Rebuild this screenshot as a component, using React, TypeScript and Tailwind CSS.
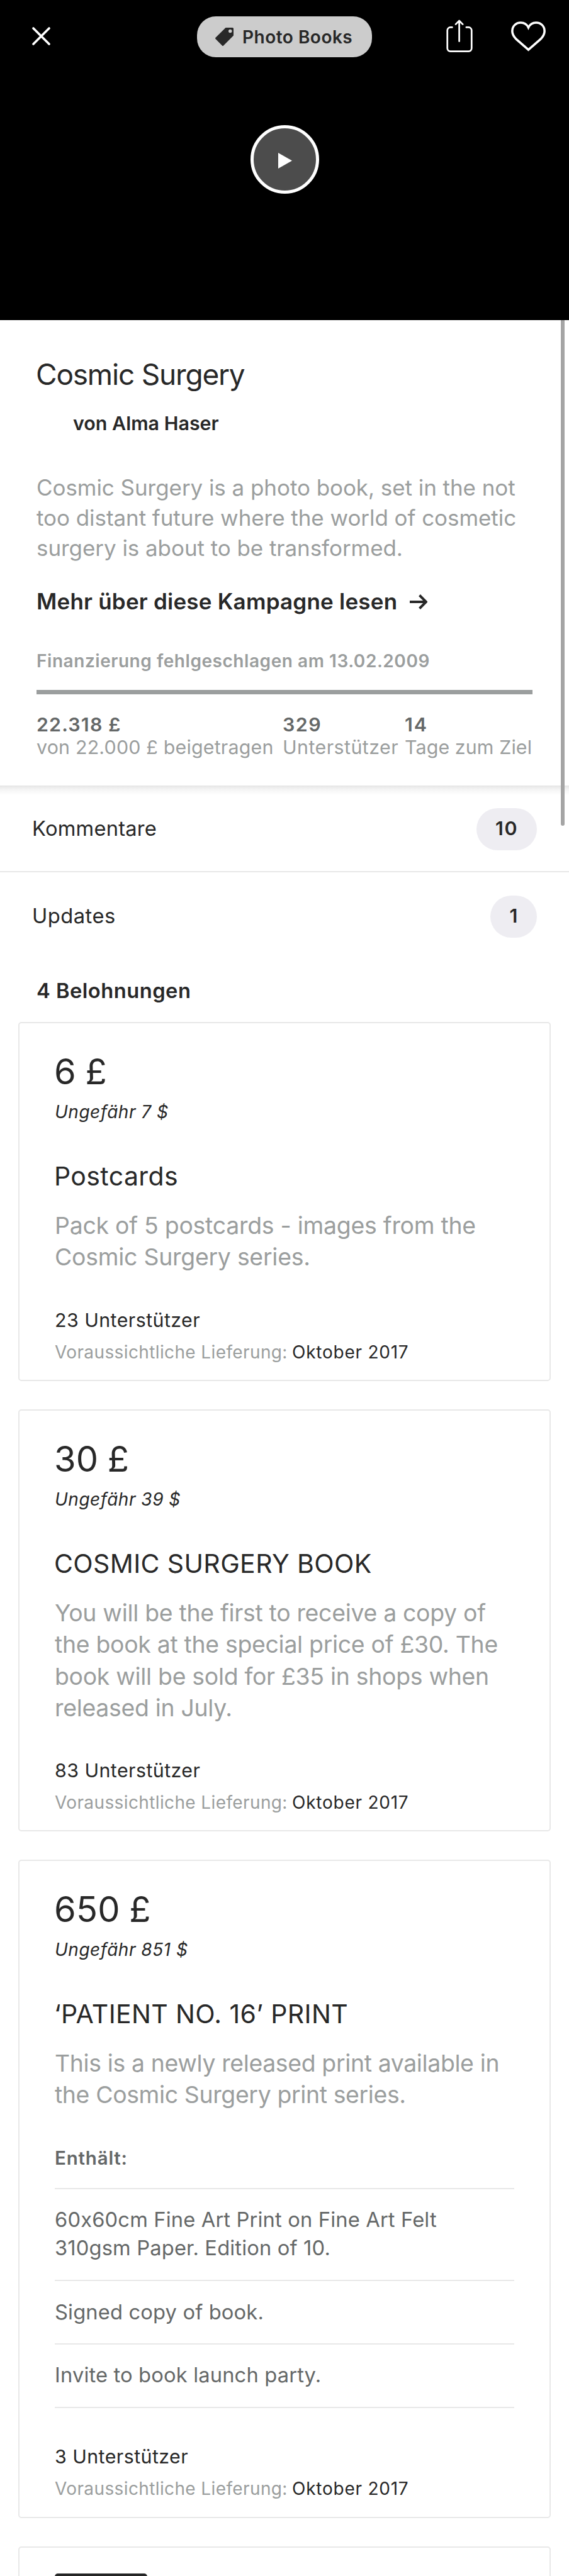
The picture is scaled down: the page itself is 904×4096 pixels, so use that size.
import React from "react";

function Header() {
  return (
    <header className="h-[509px] w-full bg-black">
      <div className="flex pt-[26px]">
        <button className="mt-[17px] ml-[51px] h-[29px] w-[29px]" aria-label="Schließen">
          <svg viewBox="0 0 29 29" className="block h-[29px] w-[29px]" fill="none" stroke="white" strokeWidth="3.6" strokeLinecap="round">
            <path d="M2 2 27 27M27 2 2 27" />
          </svg>
        </button>
        <div className="ml-[233px] flex h-[65px] w-[278px] items-center rounded-[30px] bg-[#cccccc] pl-[29px] text-[#282828]">
          <svg viewBox="0 0 36 36" className="block h-[29px] w-[29px]" fill="currentColor" fillRule="evenodd">
            <path d="M20.5 0H34a2 2 0 0 1 2 2v13.5L16.2 35.3a1.8 1.8 0 0 1-2.6 0L.7 22.2a1.8 1.8 0 0 1 0-2.6zM29.5 3.3a3.4 3.4 0 1 0 0 6.8 3.4 3.4 0 0 0 0-6.8z" />
          </svg>
          <span className="ml-[14px] text-[28px] leading-[40px] font-semibold tracking-[0.49px] whitespace-nowrap">Photo Books</span>
        </div>
        <button className="mt-[4px] ml-[118px] h-[54px] w-[42px]" aria-label="Teilen">
          <svg viewBox="0 0 52 66" className="block h-[53px] w-[42px]" fill="none" stroke="white" strokeWidth="3.4" strokeLinecap="round" strokeLinejoin="round">
            <path d="M11.5 15.5H8a6 6 0 0 0-6 6V57a6 6 0 0 0 6 6H44a6 6 0 0 0 6-6V21.500a6 6 0 0 0-6-6H39.5" />
            <path d="M25.500 43V3M18.500 9.500l7-7 7 7" />
          </svg>
        </button>
        <button className="mt-[8px] ml-[61px] h-[48px] w-[55px]" aria-label="Merken">
          <svg viewBox="0 0 68 59" className="block h-[48px] w-[55px]" fill="none" stroke="white" strokeWidth="4.4" strokeLinejoin="miter">
            <path d="M34 12C31 5.500 25.500 2.300 19 2.300 9 2.300 2.300 9.500 2.300 19c0 7 3.500 11.500 8 16L34 55.500 57.700 35c4.500-4.500 8-9 8-16C65.700 9.500 59 2.300 49 2.300 42.500 2.300 37 5.500 34 12z" />
          </svg>
        </button>
      </div>
      <div className="mt-[108px] flex justify-center">
        <div className="flex h-[109px] w-[109px] items-center justify-center rounded-full border-[5px] border-white bg-[#4c4c4c]">
          <svg viewBox="0 0 22 25" className="mt-[4px] ml-[2px] block h-[25px] w-[22px]" fill="white">
            <path d="M0 0 22 12.500 0 25z" />
          </svg>
        </div>
      </div>
    </header>
  );
}

function Intro() {
  return (
    <section className="h-[740px] pl-[58px]">
      <h1 className="-ml-px pt-[56px] text-[46px] leading-[60px] tracking-[-1.2px] text-[#282828]">Cosmic Surgery</h1>
      <p className="mt-[28px] ml-[58px] text-[30.4px] leading-[40px] font-semibold tracking-[0.02px] text-[#282828]">von Alma Haser</p>
      <p className="mt-[58px] text-[35px] leading-[48.200px] tracking-[-0.06px] text-[#9b9e9e]">
        Cosmic Surgery is a photo book, set in the not
        <br />
        too distant future where the world of cosmetic
        <br />
        surgery is about to be transformed.
      </p>
      <p className="mt-[36px] flex items-center text-[35px] leading-[48px] font-semibold tracking-[0.22px] text-[#282828]">
        Mehr über diese Kampagne lesen
        <svg viewBox="0 0 28 24" className="mt-[2px] ml-[20px] h-[24px] w-[28px]" fill="none" stroke="currentColor" strokeWidth="4">
          <path d="M0 12H25M15.500 1.500 26 12 15.500 22.500" />
        </svg>
      </p>
      <p className="mt-[51px] text-[28px] leading-[40px] font-semibold tracking-[0.55px] text-[#9b9e9e]">Finanzierung fehlgeschlagen am 13.02.2009</p>
      <div className="mt-[26px] h-[7px] w-[788px] bg-[#9b9e9e]" />
      <div className="mt-[30px] flex text-[30.4px] leading-[36px] whitespace-nowrap text-[#9b9e9e]">
        <div className="w-[391px]">
          <div className="font-semibold tracking-[1.18px] text-[#656868]">22.318 £</div>
          <div className="tracking-[0.18px]">von 22.000 £ beigetragen</div>
        </div>
        <div className="w-[194px]">
          <div className="font-semibold tracking-[1.5px] text-[#656868]">329</div>
          <div className="tracking-[0.44px]">Unterstützer</div>
        </div>
        <div>
          <div className="font-semibold tracking-[2px] text-[#656868]">14</div>
          <div className="tracking-[0.1px]">Tage zum Ziel</div>
        </div>
      </div>
    </section>
  );
}

function Links() {
  return (
    <section className="text-[#282828]">
      <div className="flex h-[136px] items-center justify-between bg-[linear-gradient(to_bottom,#e5e5e5_0px,#f4f4f4_6px,#ffffff_15px)] pr-[51px] pl-[51px]">
        <span className="text-[32.700px] leading-[40px] tracking-[0.22px]">Kommentare</span>
        <span className="mt-[2px] flex h-[67px] w-[96px] items-center justify-center rounded-full bg-[#eeedf2] text-[30.400px] font-semibold tracking-[1.500px]">10</span>
      </div>
      <div className="flex h-[140px] items-center justify-between border-t-2 border-[#e8e8e8] pr-[51px] pl-[51px]">
        <span className="text-[32.700px] leading-[40px] tracking-[0.47px]">Updates</span>
        <span className="mt-[2px] flex h-[67px] w-[74px] items-center justify-center rounded-full bg-[#eeedf2] text-[30.400px] font-semibold">1</span>
      </div>
    </section>
  );
}

interface RewardProps {
  price: string;
  approx: string;
  title: string;
  lines: string[];
  bodyTracking: string;
  backers: string;
  height: string;
  items?: React.ReactNode;
}

function Reward({ price, approx, title, lines, bodyTracking, backers, height, items }: RewardProps) {
  return (
    <article className={`mb-[45px] ml-[29px] w-[846px] rounded-[5px] border-2 border-[#e8e8e8] pl-[56px] text-[#282828] ${height}`}>
      <div className="-ml-px pt-[41px] text-[56px] leading-[72px] tracking-[0.2px] [word-spacing:-1.5px]">{price}</div>
      <div className="mt-[8px] text-[28px] leading-[40px] tracking-[0.5px] italic">{approx}</div>
      <h2 className="mt-[57px] -ml-px text-[41px] leading-[50px] tracking-[0.38px]">{title}</h2>
      <p className={`mt-[29px] text-[37.400px] leading-[50.300px] whitespace-nowrap text-[#9b9e9e] ${bodyTracking}`}>
        {lines.map((line) => (
          <span key={line} className="block">{line}</span>
        ))}
      </p>
      {items}
      <p className="mt-[54px] text-[30.400px] leading-[40px] tracking-[0.43px]">{backers}</p>
      <p className="mt-[11px] flex text-[28px] leading-[40px] whitespace-nowrap">
        <span className="w-[377px] tracking-[0.38px] text-[#9b9e9e]">Voraussichtliche Lieferung:</span>
        <span className="tracking-[0.76px]">Oktober 2017</span>
      </p>
    </article>
  );
}

function Contents() {
  return (
    <div className="w-[730px] pb-[3px] text-[32.700px] leading-[45.800px] tracking-[0.14px] text-[#656868]">
      <div className="mt-[54px] border-b-2 border-[#e8e8e8] pb-[28px] text-[29.500px] leading-[40px] font-semibold tracking-[0.8px]">Enthält:</div>
      <div className="border-b-2 border-[#e8e8e8] pt-[26px] pb-[27px]">
        60x60cm Fine Art Print on Fine Art Felt
        <br />
        310gsm Paper. Edition of 10.
      </div>
      <div className="border-b-2 border-[#e8e8e8] pt-[26.500px] pb-[26.500px]">Signed copy of book.</div>
      <div className="border-b-2 border-[#e8e8e8] pt-[26.500px] pb-[26.500px]">Invite to book launch party.</div>
    </div>
  );
}

export default function App() {
  return (
    <div className="relative h-[4096px] w-[904px] overflow-hidden bg-white font-['Inter',sans-serif] [font-feature-settings:'calt'_0]">
      <Header />
      <Intro />
      <Links />
      <h2 className="mt-[25px] mb-[25px] ml-[58px] text-[32.700px] leading-[50px] font-semibold tracking-[0.48px] text-[#282828]">4 Belohnungen</h2>
      <Reward
        price="6 £"
        approx="Ungefähr 7 $"
        title="Postcards"
        lines={["Pack of 5 postcards - images from the", "Cosmic Surgery series."]}
        bodyTracking="tracking-[-0.25px]"
        backers="23 Unterstützer"
        height="h-[571px]"
      />
      <Reward
        price="30 £"
        approx="Ungefähr 39 $"
        title="COSMIC SURGERY BOOK"
        lines={[
          "You will be the first to receive a copy of",
          "the book at the special price of £30. The",
          "book will be sold for £35 in shops when",
          "released in July.",
        ]}
        bodyTracking="tracking-[-0.3px]"
        backers="83 Unterstützer"
        height="h-[671px]"
      />
      <Reward
        price="650 £"
        approx="Ungefähr 851 $"
        title="‘PATIENT NO. 16’ PRINT"
        lines={["This is a newly released print available in", "the Cosmic Surgery print series."]}
        bodyTracking="tracking-[-0.36px]"
        backers="3 Unterstützer"
        height="h-[1047px]"
        items={<Contents />}
      />
      <div className="ml-[29px] h-[120px] w-[846px] rounded-[5px] border-2 border-[#e8e8e8] pt-[41px] pl-[56px]">
        <div className="h-[60px] w-[147px] rounded-[5px] bg-[#252626]" />
      </div>
      <div className="absolute top-[509px] left-[891px] h-[804px] w-[6px] rounded-b-full bg-[#a5a5a5]" />
    </div>
  );
}
